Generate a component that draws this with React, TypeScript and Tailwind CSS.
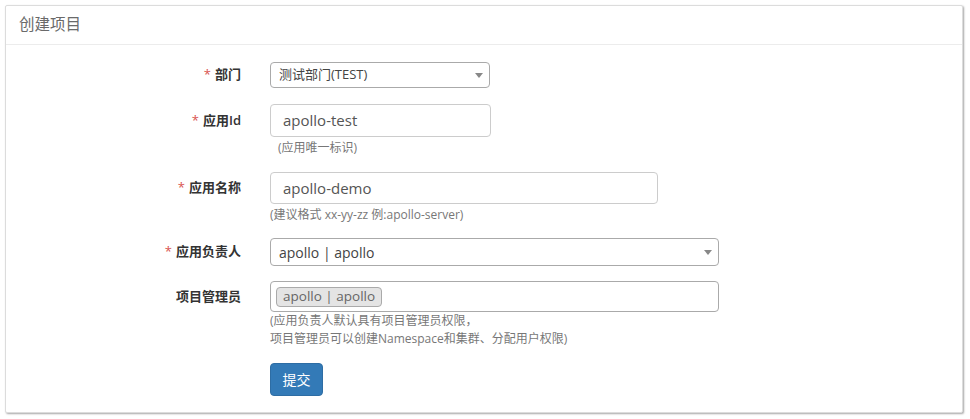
import React from "react";

const font = { fontFamily: '"Open Sans", "Noto Sans CJK SC", sans-serif' };

function Arrow() {
  return (
    <svg width="8" height="5" viewBox="0 0 8 5" className="shrink-0">
      <path d="M0 0 L8 0 L4 5 Z" fill="#888" />
    </svg>
  );
}

function Label({ text, required, h }: { text: string; required?: boolean; h: string }) {
  return (
    <div className={`w-[235px] shrink-0 flex items-center justify-end text-[13px] font-semibold text-[#333] ${h}`}>
      {required && <span className="text-[#d9534f] font-normal mr-[4px]">*</span>}
      {text}
    </div>
  );
}

export default function App() {
  return (
    <div className="w-[970px] h-[419px] bg-white pt-[5px] pl-[5px]" style={font}>
      <div className="w-[958px] h-[408px] border border-[#dcdcdc] rounded-[2px] bg-white shadow-[1px_1px_2px_rgba(0,0,0,0.35)] flex flex-col">
        <div className="h-[39px] border-b border-[#ececec] flex items-center px-[13px] text-[15.5px] text-[#6a6a6a]">
          创建项目
        </div>
        <div className="flex flex-col pt-[17px]">
          {/* 部门 */}
          <div className="flex">
            <Label text="部门" required h="h-[26px]" />
            <div className="ml-[29px] w-[220px] h-[26px] border border-[#aaa] rounded-[4px] flex items-center justify-between pl-[8px] pr-[6px] text-[13px] text-[#444]">
              <span>测试部门(TEST)</span>
              <Arrow />
            </div>
          </div>
          {/* 应用Id */}
          <div className="flex mt-[16px]">
            <Label text="应用Id" required h="h-[33px]" />
            <div className="ml-[29px] flex flex-col">
              <div className="w-[221px] h-[33px] border border-[#ccc] rounded-[4px] flex items-center pl-[12px] text-[15px] text-[#555]">
                apollo-test
              </div>
              <div className="mt-[2px] pl-[8px] text-[12px] leading-[17px] text-[#777]">(应用唯一标识)</div>
            </div>
          </div>
          {/* 应用名称 */}
          <div className="flex mt-[16px]">
            <Label text="应用名称" required h="h-[32px]" />
            <div className="ml-[29px] flex flex-col">
              <div className="w-[388px] h-[32px] border border-[#ccc] rounded-[4px] flex items-center pl-[12px] text-[15px] text-[#555]">
                apollo-demo
              </div>
              <div className="mt-[2px] text-[12px] leading-[17px] text-[#777]">(建议格式 xx-yy-zz 例:apollo-server)</div>
            </div>
          </div>
          {/* 应用负责人 */}
          <div className="flex mt-[15px]">
            <Label text="应用负责人" required h="h-[28px]" />
            <div className="ml-[29px] w-[449px] h-[28px] border border-[#aaa] rounded-[4px] flex items-center justify-between pl-[8px] pr-[6px] text-[14px] text-[#444]">
              <span>apollo | apollo</span>
              <Arrow />
            </div>
          </div>
          {/* 项目管理员 */}
          <div className="flex mt-[15px]">
            <Label text="项目管理员" h="h-[31px]" />
            <div className="ml-[29px] flex flex-col">
              <div className="w-[449px] h-[31px] border border-[#aaa] rounded-[4px] flex items-center pl-[5px]">
                <span className="h-[20px] px-[6px] border border-[#aaa] rounded-[4px] bg-[#e4e4e4] text-[13.5px] text-[#666] flex items-center">
                  apollo | apollo
                </span>
              </div>
              <div className="text-[12px] leading-[18px] text-[#777]">
                <div>(应用负责人默认具有项目管理员权限，</div>
                <div>项目管理员可以创建Namespace和集群、分配用户权限)</div>
              </div>
            </div>
          </div>
          {/* 提交 */}
          <div className="flex mt-[15px]">
            <div className="w-[235px] shrink-0" />
            <button className="ml-[29px] w-[53px] h-[33px] bg-[#337ab7] border border-[#2e6da4] rounded-[4px] text-white text-[14px]">
              提交
            </button>
          </div>
        </div>
      </div>
    </div>
  );
}
